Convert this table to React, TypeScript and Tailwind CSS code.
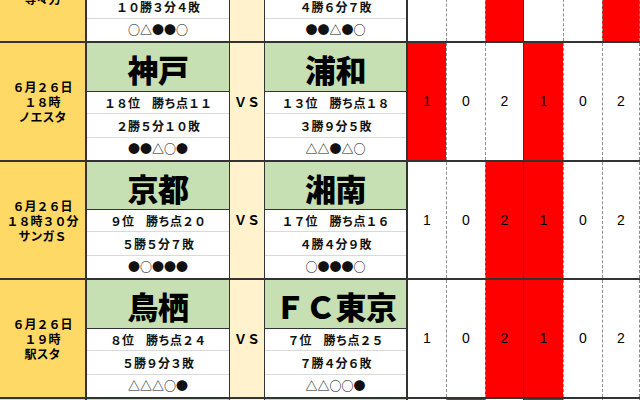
type Team = { name: string; rank: string; record: string; form: string };

type Match = {
  date: string[];
  home: Team;
  away: Team;
  red: number[];
  tall: boolean;
};

const matches: Match[] = [
  {
    date: ["６月２６日", "１９時", "等々力"],
    home: { name: "川崎", rank: "２位　勝ち点３７", record: "１０勝３分４敗", form: "○△●●○" },
    away: { name: "大分", rank: "２０位　勝ち点１８", record: "４勝６分７敗", form: "●●△●○" },
    red: [2, 5],
    tall: false,
  },
  {
    date: ["６月２６日", "１８時", "ノエスタ"],
    home: { name: "神戸", rank: "１８位　勝ち点１１", record: "２勝５分１０敗", form: "●●△○●" },
    away: { name: "浦和", rank: "１３位　勝ち点１８", record: "３勝９分５敗", form: "△△●△○" },
    red: [0, 3],
    tall: true,
  },
  {
    date: ["６月２６日", "１８時３０分", "サンガＳ"],
    home: { name: "京都", rank: "９位　勝ち点２０", record: "５勝５分７敗", form: "●○●●●" },
    away: { name: "湘南", rank: "１７位　勝ち点１６", record: "４勝４分９敗", form: "○●●●○" },
    red: [2, 3],
    tall: false,
  },
  {
    date: ["６月２６日", "１９時", "駅スタ"],
    home: { name: "鳥栖", rank: "８位　勝ち点２４", record: "５勝９分３敗", form: "△△△○●" },
    away: { name: "ＦＣ東京", rank: "７位　勝ち点２５", record: "７勝４分６敗", form: "△△○○●" },
    red: [2, 3],
    tall: true,
  },
  {
    date: ["６月２６日", "１９時", "日産ス"],
    home: { name: "柏", rank: "４位　勝ち点２９", record: "９勝２分６敗", form: "○○●△○" },
    away: { name: "横浜FM", rank: "１位　勝ち点３４", record: "１０勝４分２敗", form: "○○○△○" },
    red: [1, 3],
    tall: false,
  },
];

const scores = ["1", "0", "2", "1", "0", "2"];
const numWidths = ["w-[38px]", "w-[39px]", "w-[38px]", "w-[40px]", "w-[39px]", "w-[38px]"];
const numBorders = [
  "",
  "border-l border-dashed border-[#8c8c8c]",
  "border-l border-dashed border-[#8c8c8c]",
  "border-l border-solid border-[#333]",
  "border-l border-dashed border-[#8c8c8c]",
  "border-l border-r border-dashed border-[#8c8c8c]",
];
const subRows = ["h-[21px]", "h-[24px] border-t border-[#d9d9d9]", "h-[23px] border-t border-[#d9d9d9]"];

const jp = "font-['Noto_Sans_CJK_JP',sans-serif]";

function TeamCell({ team, wide, tall }: { team: Team; wide: string; tall: boolean }) {
  return (
    <div className={`flex ${wide} shrink-0 flex-col`}>
      <div
        className={`flex ${tall ? "h-[49px]" : "h-[48px]"} items-center justify-center border-b border-[#333] bg-[#c6e0b4] pt-[3px]`}
      >
        <span className={`${jp} text-[31px] font-black leading-none tracking-[-0.5px] text-black`}>
          {team.name}
        </span>
      </div>
      {[team.rank, team.record, team.form].map((line, i) => (
        <div
          key={i}
          className={`flex ${subRows[i]} items-center justify-center bg-white ${jp} text-[12px] font-bold leading-none text-[#111]`}
        >
          {line}
        </div>
      ))}
    </div>
  );
}

function MatchRow({ m }: { m: Match }) {
  return (
    <div className={`flex ${m.tall ? "h-[119px]" : "h-[118px]"} border-t-2 border-[#333]`}>
      <div
        className={`flex w-[87px] shrink-0 flex-col items-center justify-center border-r-2 border-[#333] bg-[#ffd966] ${jp} text-[12px] font-bold leading-[15px] text-black`}
      >
        {m.date.map((d) => (
          <div key={d}>{d}</div>
        ))}
      </div>
      <TeamCell team={m.home} wide="w-[142px]" tall={m.tall} />
      <div
        className={`flex w-[36px] shrink-0 items-center justify-center border-x border-[#333] bg-[#fff2cc] ${jp} text-[13px] font-bold text-black`}
      >
        ＶＳ
      </div>
      <div className="flex w-[143px] shrink-0 border-r-2 border-[#333]">
        <TeamCell team={m.away} wide="w-full" tall={m.tall} />
      </div>
      {scores.map((s, i) => (
        <div
          key={i}
          className={`flex ${numWidths[i]} shrink-0 items-center justify-center ${numBorders[i]} ${
            m.red.includes(i) ? "bg-[#ff0000]" : "bg-white"
          } font-['Liberation_Sans',sans-serif] text-[14px] text-black`}
        >
          {s}
        </div>
      ))}
    </div>
  );
}

export default function App() {
  return (
    <div className="h-[400px] w-[640px] overflow-hidden bg-white">
      <div className="-mt-[77px]">
        {matches.map((m, i) => (
          <MatchRow key={i} m={m} />
        ))}
      </div>
    </div>
  );
}
